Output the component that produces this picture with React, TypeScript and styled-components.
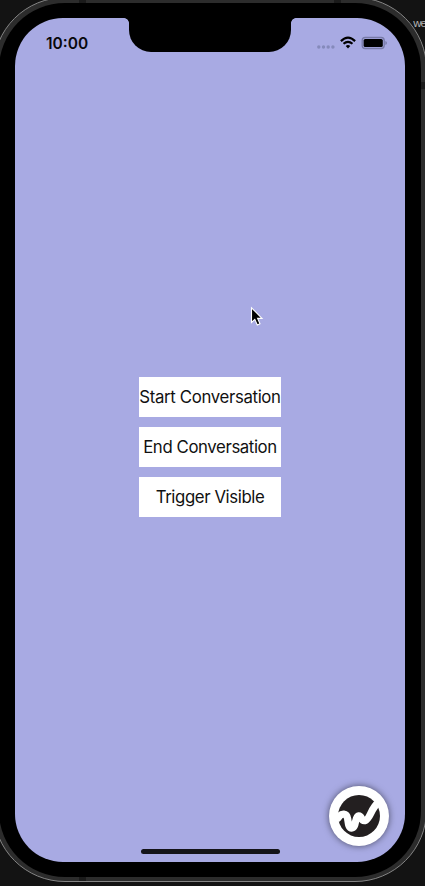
import React from "react";
import styled, { createGlobalStyle } from "styled-components";

const GlobalStyle = createGlobalStyle`
  * { box-sizing: border-box; }
  html, body { margin: 0; background: #131313; }
  body { width: 425px; height: 886px; overflow: hidden; }
`;

const Desktop = styled.main`
  position: relative;
  width: 425px;
  height: 886px;
  overflow: hidden;
  background: #131313;
  font-family: Inter, "Liberation Sans", sans-serif;
`;

const WindowLabel = styled.span`
  position: absolute;
  right: -1px;
  top: 16px;
  font-family: "Liberation Sans", sans-serif;
  font-size: 11.5px;
  letter-spacing: -1px;
  line-height: 14px;
  color: #b4b4b4;
`;

/* The four antenna bands are darker stretches of the metal frame. */
const Chassis = styled.div`
  width: 434px;
  height: 885px;
  margin: -3px 0 0 -7px;
  padding: 5px;
  border: 1px solid #858585;
  border-radius: 72px;
  background:
    linear-gradient(#1b1b1b, #1b1b1b) 85px 0 / 7px 5px no-repeat,
    linear-gradient(#1b1b1b, #1b1b1b) 340px 0 / 7px 5px no-repeat,
    linear-gradient(#1b1b1b, #1b1b1b) 85px 100% / 7px 5px no-repeat,
    linear-gradient(#1b1b1b, #1b1b1b) 100% 84px / 5px 7px no-repeat,
    #2c2c2c;
`;

const Bezel = styled.div`
  width: 422px;
  height: 874px;
  padding: 15px 16px;
  border-radius: 66px;
  background: #000;
`;

const Screen = styled.div`
  position: relative;
  display: flex;
  flex-direction: column;
  height: 844px;
  overflow: hidden;
  border-radius: 48px;
  background: #a8aae3;
`;

const StatusBar = styled.header`
  display: flex;
  justify-content: space-between;
  height: 47px;
  padding-left: 31px;
  padding-right: 18px;
`;

const Clock = styled.time`
  padding-top: 15.5px;
  font-size: 15.5px;
  line-height: 19px;
  font-weight: 600;
  color: #08080c;
`;

const Notch = styled.div`
  position: absolute;
  inset: 0 114px auto;
  height: 33.5px;
  border-radius: 0 0 22px 22px;
  background: #000;

  &::before,
  &::after {
    content: "";
    position: absolute;
    top: 0;
    width: 5px;
    height: 5px;
  }
  &::before {
    right: 100%;
    background: radial-gradient(circle at 0 100%, transparent 4.5px, #000 5.2px);
  }
  &::after {
    left: 100%;
    background: radial-gradient(circle at 100% 100%, transparent 4.5px, #000 5.2px);
  }
`;

const StatusIcons = styled.svg`
  width: 72px;
  height: 18px;
  margin-top: 15.5px;
`;

const Actions = styled.div`
  flex: 1;
  display: flex;
  flex-direction: column;
  align-items: center;
  justify-content: center;
  gap: 10px;
  padding-bottom: 20px;
`;

const ActionButton = styled.button<{ $tracking: number }>`
  display: flex;
  align-items: center;
  justify-content: center;
  width: 142px;
  height: 40px;
  padding: 0;
  border: 0;
  background: #fff;
  color: #111;
  font: 400 16.8px/20px Inter, "Liberation Sans", sans-serif;
  letter-spacing: ${(p) => p.$tracking}px;
  white-space: nowrap;
`;

const Launcher = styled.button`
  position: absolute;
  right: 16px;
  bottom: 16px;
  display: grid;
  place-items: center;
  width: 60px;
  height: 60px;
  padding: 0;
  border: 0;
  border-radius: 50%;
  background: #fff;
  box-shadow: 0 0 7px rgba(0, 0, 0, 0.55);
`;

const HomeIndicator = styled.div`
  width: 139px;
  height: 5px;
  margin: 0 auto 8px;
  border-radius: 3px;
  background: #141419;
`;

const Cursor = styled.svg`
  position: absolute;
  left: 250px;
  top: 306px;
`;

const actions = [
  { label: "Start Conversation", tracking: -0.35 },
  { label: "End Conversation", tracking: -0.4 },
  { label: "Trigger Visible", tracking: -0.4 },
];

export default function App() {
  return (
    <Desktop>
      <GlobalStyle />
      <WindowLabel>we</WindowLabel>
      <Chassis>
        <Bezel>
          <Screen>
            <StatusBar>
              <Clock>10:00</Clock>
              <Notch />
              <StatusIcons viewBox="0 0 72 18" aria-label="Wi-Fi and battery">
                <g fill="#858abb">
                  <circle cx="3.8" cy="13" r="1.7" />
                  <circle cx="8.5" cy="13" r="1.7" />
                  <circle cx="13.2" cy="13" r="1.7" />
                  <circle cx="17.9" cy="13" r="1.7" />
                </g>
                <g fill="none" stroke="#000" strokeWidth="2.2">
                  <path d="M25.9 7.1Q33 .1 40.1 7.1" />
                  <path d="M28.5 9.8Q33 5.8 37.5 9.8" />
                </g>
                <path d="M30.7 12Q33 10.2 35.3 12L33 14.4Z" />
                <rect x="47.2" y="3.5" width="22" height="11" rx="3" fill="none" stroke="#777aa7" strokeWidth="1.3" />
                <rect x="48.6" y="4.9" width="19.2" height="8.2" rx="1.6" />
                <path d="M70.4 7v4Q71.9 10.6 71.9 9T70.4 7Z" fill="#777aa7" />
              </StatusIcons>
            </StatusBar>
            <Actions>
              {actions.map((a) => (
                <ActionButton key={a.label} $tracking={a.tracking}>
                  {a.label}
                </ActionButton>
              ))}
            </Actions>
            <HomeIndicator />
            <Launcher aria-label="Open chat">
              <svg width="44" height="44" viewBox="0 0 44 44">
                <circle cx="22" cy="22" r="21" fill="#231f20" />
                <path
                  d="M1 24C4.5 18.5 9.8 18.8 10.7 25C11.3 29 11.5 34 14.7 34C19.5 34 17.5 22.4 21.6 21.8C25.2 21.4 23.8 27.6 28 26.6C33.2 25.4 34 14 41 9"
                  fill="none"
                  stroke="#fff"
                  strokeWidth="7.3"
                  strokeLinecap="round"
                  strokeLinejoin="round"
                />
              </svg>
            </Launcher>
          </Screen>
        </Bezel>
      </Chassis>
      <Cursor width="14" height="22" viewBox="0 0 14 22">
        <path
          d="M1.5 1.8V16.4L4.8 13.4L7.3 19L10 17.8L7.6 12.4H12Z"
          fill="#000"
          stroke="#fff"
          strokeWidth="1.1"
        />
      </Cursor>
    </Desktop>
  );
}
